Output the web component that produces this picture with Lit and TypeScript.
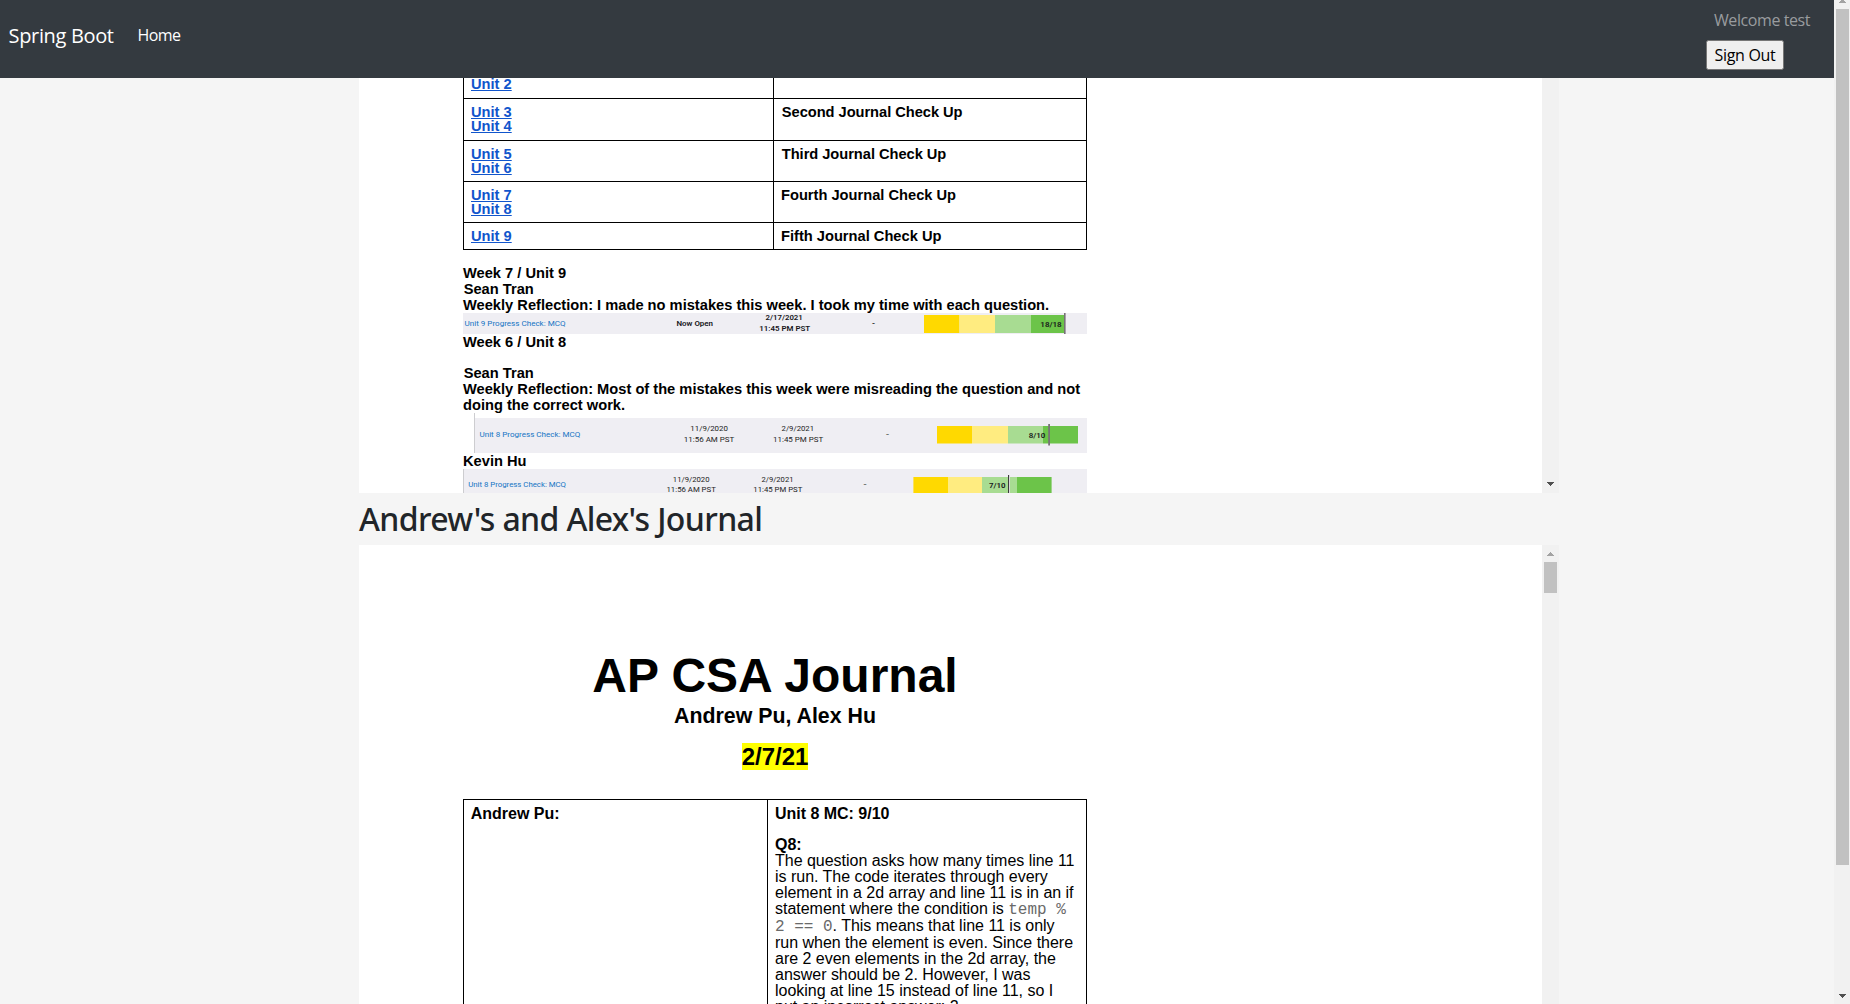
import { LitElement, html, svg, css } from "lit";
import { customElement, property } from "lit/decorators.js";

interface Label {
  text: string;
  x: number;
  y: number;
  w: number;
  link?: boolean;
  bold?: boolean;
}

interface Segment {
  x: number;
  w: number;
  color: string;
}

interface Strip {
  height: number;
  left: number;
  top: number;
  edge: boolean;
  labels: Label[];
  segments: Segment[];
  barY: number;
  barH: number;
  marker: { x: number; y: number; w: number; h: number; color: string; gap?: boolean };
}

const GOLD = "#ffd900";
const CREAM = "#ffec80";
const LIME = "#a8dc92";
const GREEN = "#6cc449";

const UNIT9: Strip = {
  height: 21,
  left: 0,
  top: 0,
  edge: false,
  labels: [
    { text: "Unit 9 Progress Check: MCQ", x: 1.5, y: 12.7, w: 101, link: true },
    { text: "Now Open", x: 213.5, y: 12.7, w: 36.5, bold: true },
    { text: "2/17/2021", x: 302.6, y: 7.4, w: 37.2, bold: true },
    { text: "11:45 PM PST", x: 296.2, y: 18, w: 51, bold: true },
    { text: "-", x: 409, y: 13, w: 3, bold: true },
    { text: "18/18", x: 577.3, y: 13.8, w: 21.4, bold: true },
  ],
  segments: [
    { x: 461, w: 35.5, color: GOLD },
    { x: 496.5, w: 35.5, color: CREAM },
    { x: 532, w: 36, color: LIME },
    { x: 568, w: 33, color: GREEN },
  ],
  barY: 2,
  barH: 18,
  marker: { x: 601, y: 0, w: 1.6, h: 21, color: "#777277" },
};

const UNIT8_SEAN: Strip = {
  height: 40,
  left: 11,
  top: 5,
  edge: true,
  labels: [
    { text: "Unit 8 Progress Check: MCQ", x: 16.5, y: 23.7, w: 100.8, link: true },
    { text: "11/9/2020", x: 227.3, y: 18, w: 37.6 },
    { text: "11:56 AM PST", x: 220.8, y: 29, w: 50.5 },
    { text: "2/9/2021", x: 318.6, y: 18, w: 32.4 },
    { text: "11:45 PM PST", x: 310, y: 29, w: 50.3 },
    { text: "-", x: 423, y: 24, w: 3 },
    { text: "8/10", x: 565.7, y: 24.5, w: 16.6, bold: true },
  ],
  segments: [
    { x: 474, w: 35, color: GOLD },
    { x: 509, w: 36, color: CREAM },
    { x: 545, w: 35, color: LIME },
    { x: 580, w: 35, color: GREEN },
  ],
  barY: 13,
  barH: 17.5,
  marker: { x: 585.2, y: 11, w: 1.8, h: 21.5, color: "#777277" },
};

const UNIT8_KEVIN: Strip = {
  height: 24,
  left: 0,
  top: 0,
  edge: true,
  labels: [
    { text: "Unit 8 Progress Check: MCQ", x: 5.2, y: 17.9, w: 97.8, link: true },
    { text: "11/9/2020", x: 209.8, y: 12.7, w: 36.7 },
    { text: "11:56 AM PST", x: 203.5, y: 23.1, w: 49.3 },
    { text: "2/9/2021", x: 298.6, y: 12.7, w: 31.8 },
    { text: "11:45 PM PST", x: 290.3, y: 23.1, w: 49 },
    { text: "-", x: 400.5, y: 18, w: 3 },
    { text: "7/10", x: 526, y: 19, w: 16.6, bold: true },
  ],
  segments: [
    { x: 450.4, w: 34.6, color: GOLD },
    { x: 485, w: 34, color: CREAM },
    { x: 519, w: 35, color: LIME },
    { x: 554, w: 34.6, color: GREEN },
  ],
  barY: 8,
  barH: 16,
  marker: { x: 545, y: 6, w: 1.2, h: 18, color: "#3c3c3c", gap: true },
};

@customElement("score-strip")
export class ScoreStrip extends LitElement {
  @property({ attribute: false }) strip!: Strip;

  static styles = css`
    :host { display: block; }
    svg { display: block; }
    text { font-family: Roboto, "Liberation Sans", sans-serif; font-size: 8px; font-weight: 400; fill: #222; }
    .link { fill: #1474c4; }
    .bold { font-weight: 600; fill: #16161a; }
  `;

  render() {
    const s = this.strip;
    const m = s.marker;
    return html`<svg width="624" height=${s.height} viewBox="0 0 624 ${s.height}">
      <rect x=${s.left} y=${s.top} width=${624 - s.left} height=${s.height - s.top} fill="#efeef3"></rect>
      ${s.edge ? svg`<rect x=${s.left} y="0" width="1" height=${s.height} fill="#cdcdd0"></rect>` : null}
      ${s.segments.map((g) => svg`<rect x=${g.x} y=${s.barY} width=${g.w} height=${s.barH} fill=${g.color}></rect>`)}
      ${m.gap ? svg`<rect x=${m.x + 0.6} y=${m.y} width="1.4" height=${s.height} fill="#fff"></rect>` : null}
      <rect x=${m.x} y=${m.y} width=${m.w} height=${m.h} fill=${m.color}></rect>
      ${s.labels.map(
        (l) => svg`<text class=${l.link ? "link" : l.bold ? "bold" : ""} x=${l.x} y=${l.y} textLength=${l.w} lengthAdjust="spacingAndGlyphs">${l.text}</text>`,
      )}
    </svg>`;
  }
}

const ROWS: { height: number; units: string[]; note: string; indent?: boolean; cut?: boolean }[] = [
  { height: 21, units: ["Unit 2"], note: "", cut: true },
  { height: 42, units: ["Unit 3", "Unit 4"], note: "Second Journal Check Up", indent: true },
  { height: 41, units: ["Unit 5", "Unit 6"], note: "Third Journal Check Up", indent: true },
  { height: 41, units: ["Unit 7", "Unit 8"], note: "Fourth Journal Check Up" },
  { height: 27, units: ["Unit 9"], note: "Fifth Journal Check Up" },
];

const arrow = (points: string, color: string, height = 4) =>
  html`<svg class="arrow" width="7" height=${height} viewBox="0 ${4 - height} 7 ${height}">
    <polygon points=${points} fill=${color} shape-rendering="crispEdges"></polygon>
  </svg>`;
const DOWN = "0,0 7,0 7,1 3.9,4 3.1,4 0,1";
const UP = "3.1,0 3.9,0 7,3 7,4 0,4 0,3";

@customElement("app-root")
export class AppRoot extends LitElement {
  static styles = css`
    :host { display: block; }
    * { box-sizing: border-box; }
    .page {
      display: grid;
      grid-template-columns: 1fr 16px;
      height: 1004px;
      overflow: hidden;
      background: #f5f5f5;
      color: #212529;
      font-family: "Open Sans", "Noto Sans", sans-serif;
    }
    .content { display: flex; flex-direction: column; height: 1004px; overflow: hidden; }
    .navbar {
      flex: none;
      display: flex;
      justify-content: space-between;
      height: 78px;
      padding: 0 24px 0 8.6px;
      background: #343a40;
      white-space: nowrap;
    }
    .links { display: flex; }
    .brand { width: 129px; padding-top: 21px; font-size: 20px; line-height: 30px; letter-spacing: -0.35px; color: #fff; }
    .home { padding-top: 23px; font-size: 16px; line-height: 24px; letter-spacing: -0.6px; color: #fff; }
    .account { display: flex; flex-direction: column; align-items: flex-start; width: 104px; padding-top: 8px; }
    .welcome { padding-left: 8px; font-size: 16px; line-height: 24px; letter-spacing: -0.42px; color: #999c9f; }
    .signout {
      width: 78px;
      height: 30px;
      margin-top: 8px;
      padding: 2px 0;
      border: 1px solid #767676;
      border-radius: 2.5px;
      background: #efefef;
      color: #000;
      font: 16px/24px "Open Sans", "Noto Sans", sans-serif;
      letter-spacing: -0.3px;
      text-align: center;
    }
    .frame {
      flex: none;
      display: grid;
      grid-template-columns: 1183px 17px;
      width: 1200px;
      margin-left: 359px;
      overflow: hidden;
    }
    .first { height: 415px; }
    .second { height: 459px; }
    .sheet {
      padding-left: 104px;
      overflow: hidden;
      background: #fff;
      color: #000;
      font-family: "Liberation Sans", Arial, sans-serif;
    }
    .heading {
      flex: none;
      height: 52px;
      margin: 0 0 0 359px;
      padding-top: 7px;
      font-family: "Noto Sans", "Open Sans", sans-serif;
      font-size: 32px;
      line-height: 38.4px;
      font-weight: 500;
      letter-spacing: -0.63px;
      white-space: nowrap;
    }
    .bar { display: flex; flex-direction: column; align-items: center; background: #f1f1f1; }
    .arrow { flex: none; display: block; }
    .thumb { flex: none; width: 13px; background: #c1c1c1; }
    .framebar-end { justify-content: flex-end; padding-bottom: 7px; }
    .framebar-start { padding-top: 7px; gap: 6px; }
    .framebar-start .thumb { height: 31px; }
    .pagebar { height: 1004px; padding: 0 0 6px 1px; }
    .pagebar .thumb { height: 856px; margin: 6px 0 auto; }

    .index {
      width: 624px;
      border: solid #000;
      border-width: 0 1px;
      font-size: 14.667px;
      line-height: 14px;
      font-weight: 700;
    }
    .row { display: grid; grid-template-columns: 309px 1fr; border-bottom: 1px solid #000; }
    .units { display: flex; flex-direction: column; align-items: flex-start; padding: 6px 0 0 7px; }
    .units.cut { padding-top: 0; margin-top: -1px; }
    .unit {
      color: #1155cc;
      text-decoration: underline;
      text-decoration-thickness: 1px;
      text-underline-offset: 1px;
      text-decoration-skip-ink: none;
    }
    .note { border-left: 1px solid #000; padding: 6px 0 0 7px; }
    .note.indent { padding-left: 7.8px; letter-spacing: -0.04px; }

    .entries { padding-top: 15px; width: 640px; font-size: 14.667px; line-height: 16px; font-weight: 700; white-space: nowrap; }
    .line { height: 16px; }
    .name { padding-left: 0.7px; }
    .gap { height: 15px; }

    .head { width: 624px; padding-top: 104px; text-align: center; font-weight: 700; white-space: nowrap; }
    .title { font-size: 48px; line-height: 53px; }
    .authors { margin-top: 2px; font-size: 21.333px; line-height: 24px; }
    .date { margin-top: 15px; font-size: 24px; line-height: 27px; height: 27px; }
    .mark { background: #ff0; }
    .log {
      display: grid;
      grid-template-columns: 303px 1fr;
      width: 624px;
      height: 240px;
      margin-top: 29px;
      border: 1px solid #000;
      border-bottom: 0;
      font-size: 16px;
      line-height: 16px;
      white-space: nowrap;
    }
    .who { padding: 6px 0 0 6.7px; font-weight: 700; }
    .answer { padding: 6px 0 0 7px; border-left: 1px solid #000; }
    .strong { font-weight: 700; }
    .text { height: 16px; letter-spacing: -0.02px; }
    .tall { height: 17px; }
    .code { font-family: "Liberation Mono", "Courier New", monospace; letter-spacing: 0; color: #6a6a6a; }
  `;

  render() {
    return html`
      <div class="page">
        <div class="content">
          <nav class="navbar">
            <div class="links">
              <span class="brand">Spring Boot</span>
              <span class="home">Home</span>
            </div>
            <div class="account">
              <span class="welcome">Welcome test</span>
              <button class="signout">Sign Out</button>
            </div>
          </nav>

          <section class="frame first">
            <div class="sheet">
              <div class="index">
                ${ROWS.map(
                  (r) => html`<div class="row" style="height:${r.height}px">
                    <div class="units ${r.cut ? "cut" : ""}">${r.units.map((u) => html`<span class="unit">${u}</span>`)}</div>
                    <div class="note ${r.indent ? "indent" : ""}">${r.note}</div>
                  </div>`,
                )}
              </div>
              <div class="entries">
                <div class="line">Week 7 / Unit 9</div>
                <div class="line name">Sean Tran</div>
                <div class="line">Weekly Reflection: I made no mistakes this week. I took my time with each question.</div>
                <score-strip .strip=${UNIT9}></score-strip>
                <div class="line">Week 6 / Unit 8</div>
                <div class="gap"></div>
                <div class="line name">Sean Tran</div>
                <div class="line">Weekly Reflection: Most of the mistakes this week were misreading the question and not</div>
                <div class="line">doing the correct work.</div>
                <score-strip .strip=${UNIT8_SEAN}></score-strip>
                <div class="line">Kevin Hu</div>
                <score-strip .strip=${UNIT8_KEVIN}></score-strip>
              </div>
            </div>
            <div class="bar framebar-end">${arrow(DOWN, "#505050")}</div>
          </section>

          <h2 class="heading">Andrew's and Alex's Journal</h2>

          <section class="frame second">
            <div class="sheet">
              <div class="head">
                <div class="title">AP CSA Journal</div>
                <div class="authors">Andrew Pu, Alex Hu</div>
                <div class="date"><span class="mark">2/7/21</span></div>
              </div>
              <div class="log">
                <div class="who">Andrew Pu:</div>
                <div class="answer">
                  <div class="text strong">Unit 8 MC: 9/10</div>
                  <div class="gap"></div>
                  <div class="text strong">Q8:</div>
                  <div class="text">The question asks how many times line 11</div>
                  <div class="text">is run. The code iterates through every</div>
                  <div class="text">element in a 2d array and line 11 is in an if</div>
                  <div class="text tall">statement where the condition is <span class="code">temp %</span></div>
                  <div class="text tall"><span class="code">2 == 0</span>. This means that line 11 is only</div>
                  <div class="text">run when the element is even. Since there</div>
                  <div class="text">are 2 even elements in the 2d array, the</div>
                  <div class="text">answer should be 2. However, I was</div>
                  <div class="text">looking at line 15 instead of line 11, so I</div>
                  <div class="text">put an incorrect answer: 2.</div>
                </div>
              </div>
            </div>
            <div class="bar framebar-start">
              ${arrow(UP, "#a3a3a3")}
              <div class="thumb"></div>
            </div>
          </section>
        </div>

        <div class="bar pagebar">
          ${arrow(UP, "#a3a3a3", 3)}
          <div class="thumb"></div>
          ${arrow(DOWN, "#505050")}
        </div>
      </div>
    `;
  }
}
